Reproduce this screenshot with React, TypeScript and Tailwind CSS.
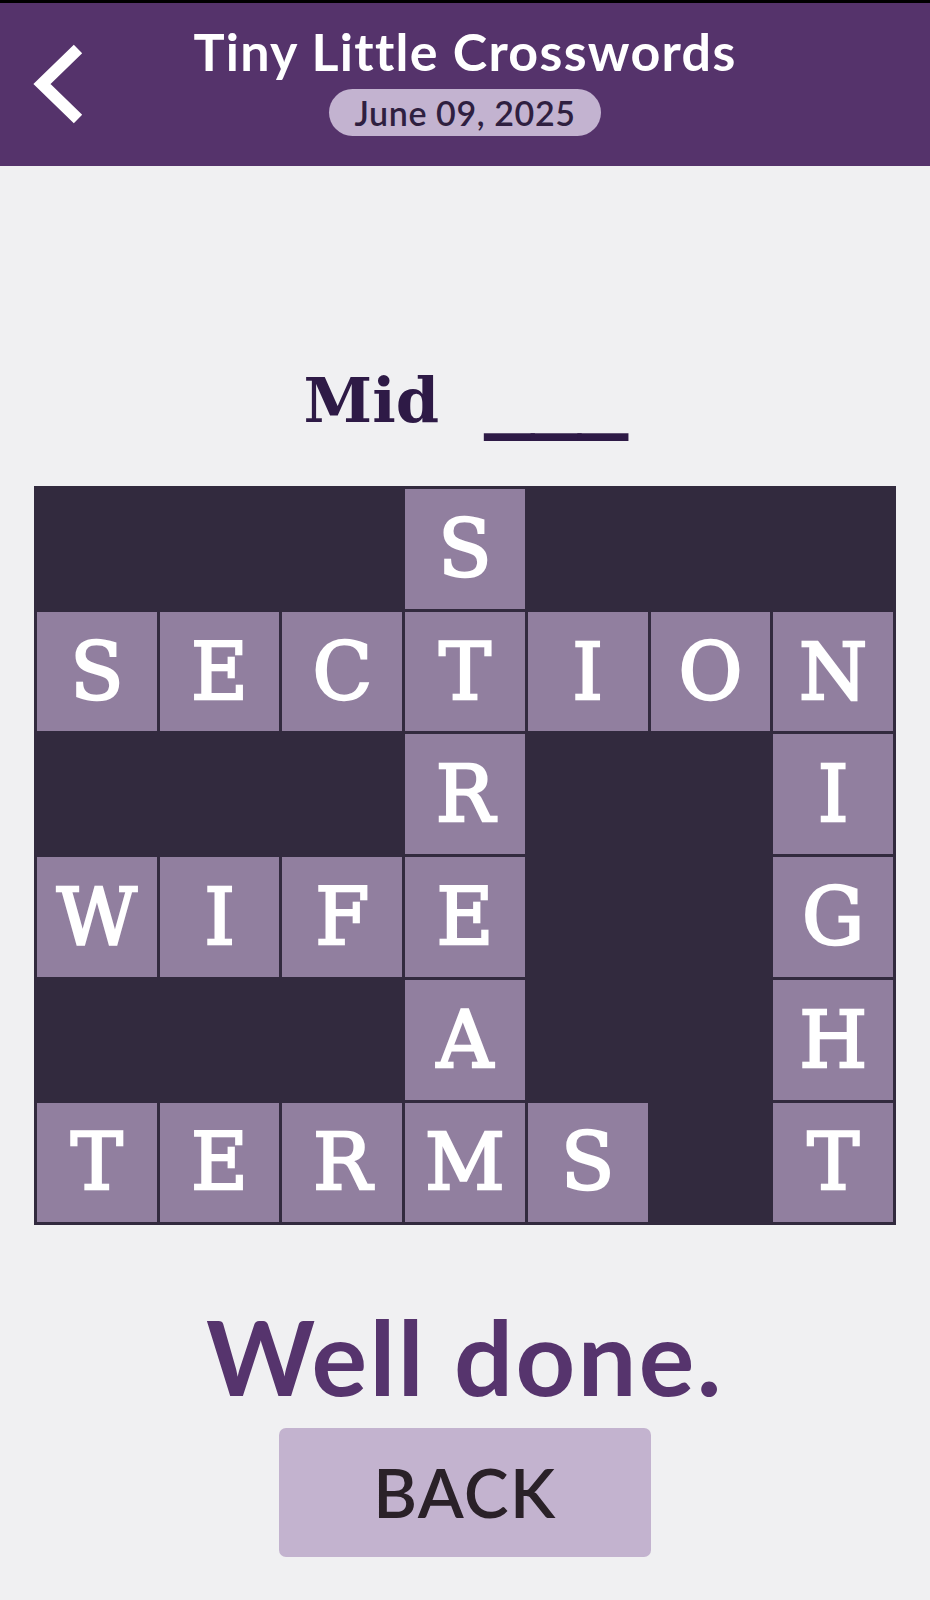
const rows = [
  '___S___',
  'SECTION',
  '___R__I',
  'WIFE__G',
  '___A__H',
  'TERMS_T',
];

const sans = { fontFamily: 'Lato, "Noto Sans", sans-serif' };
const slab = { fontFamily: '"DejaVu Serif", serif' };

function Header() {
  return (
    <header className="h-[166px] border-t-[3px] border-black bg-[#55336b] pt-[22px] grid grid-cols-[1fr_auto_1fr] items-start" style={sans}>
      <button className="justify-self-start ml-[30px] mt-[20px]" aria-label="Back">
        <svg width="54" height="80" viewBox="0 0 54 80" className="overflow-visible">
          <polyline points="48,4 12,39 48,74" fill="none" stroke="white" strokeWidth="12" strokeLinejoin="miter" />
        </svg>
      </button>
      <div className="flex flex-col items-center">
        <h1 className="text-white font-bold text-[52px] tracking-[1.3px] leading-none">Tiny Little Crosswords</h1>
        <div className="mt-[12px] w-[272px] h-[47px] rounded-full bg-[#c3b3d0] flex items-center justify-center">
          <span className="text-[#2f1f40] font-semibold text-[34px] tracking-[0.6px] leading-none">June 09, 2025</span>
        </div>
      </div>
      <div />
    </header>
  );
}

function Board() {
  return (
    <div className="mx-auto w-[862px] bg-[#322a3e] p-[3px] grid grid-cols-7 gap-[3px]">
      {rows.flatMap((row, r) =>
        row.split('').map((ch, c) =>
          ch === '_' ? (
            <div key={`${r}-${c}`} className="aspect-square" />
          ) : (
            <div
              key={`${r}-${c}`}
              className="aspect-square bg-[#917f9f] flex items-center justify-center text-white text-[78px] leading-none [-webkit-text-stroke:2.5px_white]"
              style={slab}
            >
              {ch}
            </div>
          )
        )
      )}
    </div>
  );
}

export default function App() {
  return (
    <div className="min-h-[1600px] bg-[#f0f0f2]">
      <Header />
      {/* clue line */}
      <div className="mt-[196px] flex justify-center items-baseline text-[#2e1a46] leading-none">
        <span className="font-bold text-[62px] leading-none" style={slab}>Mid</span>
        <span
          className="font-bold text-[78px] leading-none whitespace-pre translate-y-[9px] [-webkit-text-stroke:4px_#2e1a46]"
          style={{ fontFamily: '"Liberation Mono", monospace' }}
        >
          {' ___'}
        </span>
      </div>
      <div className="mt-[46px]">
        <Board />
      </div>
      <p className="mt-[79px] text-center text-[#56346d] font-bold text-[104px] tracking-[2.5px] leading-none" style={sans}>Well done.</p>
      <div className="mt-[20px] flex justify-center">
        <button className="w-[372px] h-[129px] rounded-[7px] bg-[#c3b3cf] text-[#2a2128] font-semibold text-[67px] tracking-[1.5px] leading-none" style={sans}>
          BACK
        </button>
      </div>
    </div>
  );
}
